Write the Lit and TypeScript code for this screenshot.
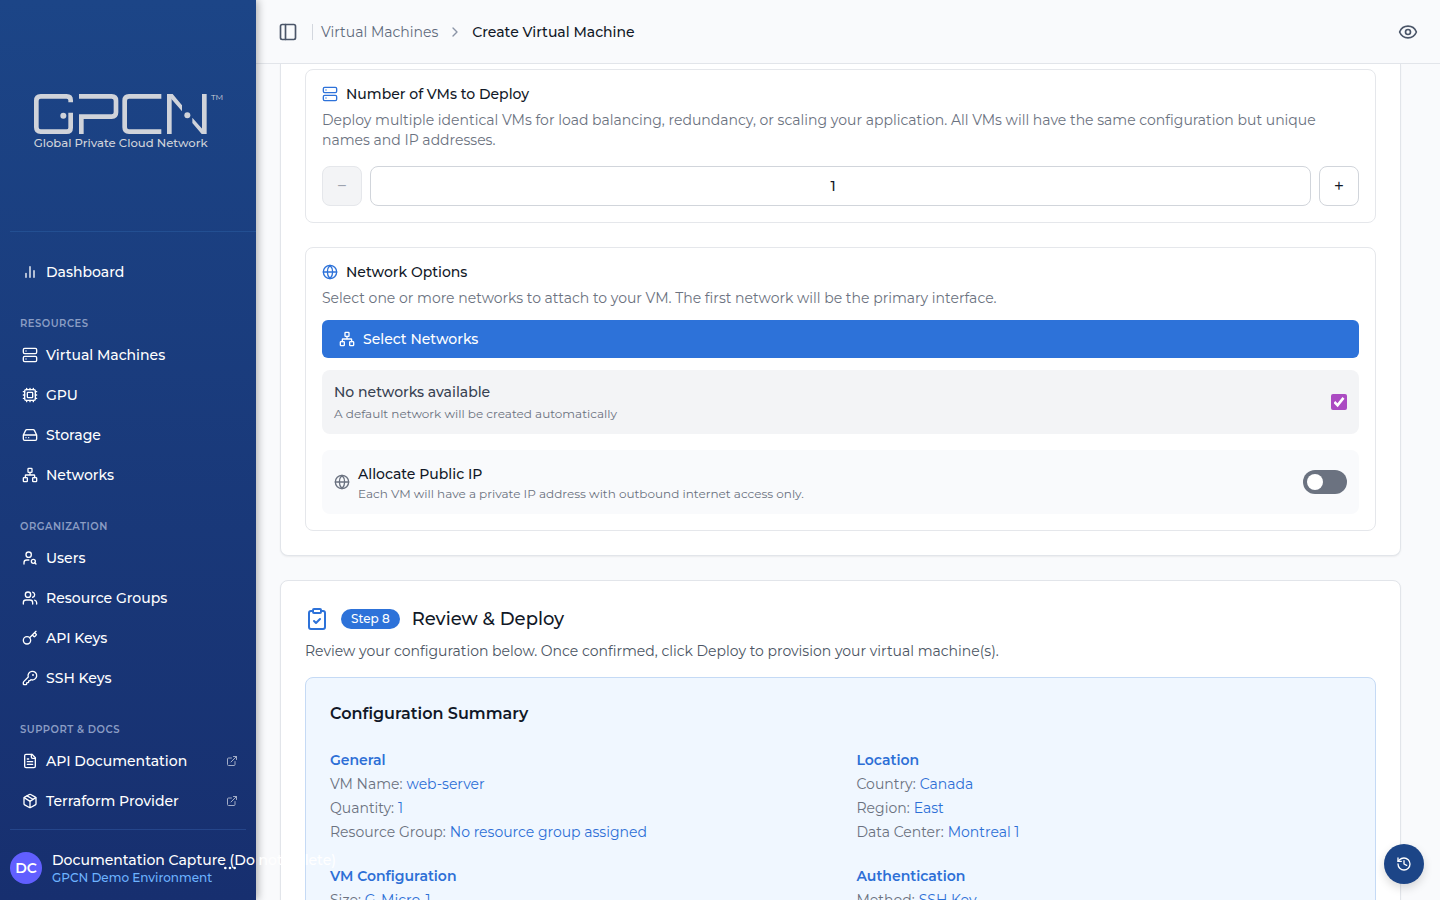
import { LitElement, html, css, svg, nothing } from "lit";
import type { TemplateResult } from "lit";
import { customElement, property, state } from "lit/decorators.js";

const icons: Record<string, TemplateResult> = {
  chart: svg`<path d="M18 20V10M12 20V4M6 20v-6"/>`,
  server: svg`<rect width="20" height="8" x="2" y="2" rx="2"/><rect width="20" height="8" x="2" y="14" rx="2"/><path d="M6 6h.01M6 18h.01"/>`,
  cpu: svg`<path d="M12 20v2M12 2v2M17 20v2M17 2v2M2 12h2M2 17h2M2 7h2M20 12h2M20 17h2M20 7h2M7 20v2M7 2v2"/><rect x="4" y="4" width="16" height="16" rx="2"/><rect x="8" y="8" width="8" height="8" rx="1"/>`,
  drive: svg`<path d="M22 12H2M5.45 5.11 2 12v6a2 2 0 0 0 2 2h16a2 2 0 0 0 2-2v-6l-3.45-6.89A2 2 0 0 0 16.76 4H7.24a2 2 0 0 0-1.79 1.11zM6 16h.01M10 16h.01"/>`,
  network: svg`<rect x="16" y="16" width="6" height="6" rx="1"/><rect x="2" y="16" width="6" height="6" rx="1"/><rect x="9" y="2" width="6" height="6" rx="1"/><path d="M5 16v-3a1 1 0 0 1 1-1h12a1 1 0 0 1 1 1v3M12 12V8"/>`,
  userSearch: svg`<circle cx="10" cy="7" r="4"/><path d="M10.3 15H7a4 4 0 0 0-4 4v2"/><circle cx="17" cy="17" r="3"/><path d="m21 21-1.9-1.9"/>`,
  users: svg`<path d="M16 21v-2a4 4 0 0 0-4-4H6a4 4 0 0 0-4 4v2"/><circle cx="9" cy="7" r="4"/><path d="M22 21v-2a4 4 0 0 0-3-3.87M16 3.13a4 4 0 0 1 0 7.75"/>`,
  key: svg`<path d="m15.5 7.5 2.3 2.3a1 1 0 0 0 1.4 0l2.1-2.1a1 1 0 0 0 0-1.4L19 4M21 2l-9.6 9.6"/><circle cx="7.5" cy="15.5" r="5.5"/>`,
  keyRound: svg`<path d="M2.586 17.414A2 2 0 0 0 2 18.828V21a1 1 0 0 0 1 1h3a1 1 0 0 0 1-1v-1a1 1 0 0 1 1-1h1a1 1 0 0 0 1-1v-1a1 1 0 0 1 1-1h.172a2 2 0 0 0 1.414-.586l.814-.814a6.5 6.5 0 1 0-4-4z"/><circle cx="16.5" cy="7.5" r=".5" fill="currentColor"/>`,
  file: svg`<path d="M15 2H6a2 2 0 0 0-2 2v16a2 2 0 0 0 2 2h12a2 2 0 0 0 2-2V7Z"/><path d="M14 2v4a2 2 0 0 0 2 2h4M10 9H8M16 13H8M16 17H8"/>`,
  box: svg`<path d="M11 21.73a2 2 0 0 0 2 0l7-4A2 2 0 0 0 21 16V8a2 2 0 0 0-1-1.73l-7-4a2 2 0 0 0-2 0l-7 4A2 2 0 0 0 3 8v8a2 2 0 0 0 1 1.73zM12 22V12"/><path d="m3.3 7 7.703 4.734a2 2 0 0 0 1.994 0L20.7 7M7.5 4.27l9 5.15"/>`,
  external: svg`<path d="M15 3h6v6M10 14 21 3M18 13v6a2 2 0 0 1-2 2H5a2 2 0 0 1-2-2V8a2 2 0 0 1 2-2h6"/>`,
  panel: svg`<rect width="18" height="18" x="3" y="3" rx="2"/><path d="M9 3v18"/>`,
  chevron: svg`<path d="m9 18 6-6-6-6"/>`,
  eye: svg`<path d="M2.062 12.348a1 1 0 0 1 0-.696 10.75 10.75 0 0 1 19.876 0 1 1 0 0 1 0 .696 10.75 10.75 0 0 1-19.876 0"/><circle cx="12" cy="12" r="3"/>`,
  globe: svg`<circle cx="12" cy="12" r="10"/><path d="M12 2a14.5 14.5 0 0 0 0 20 14.5 14.5 0 0 0 0-20M2 12h20"/>`,
  clipboard: svg`<rect width="8" height="4" x="8" y="2" rx="1"/><path d="M16 4h2a2 2 0 0 1 2 2v14a2 2 0 0 1-2 2H6a2 2 0 0 1-2-2V6a2 2 0 0 1 2-2h2M9 14l2 2 4-4"/>`,
  history: svg`<path d="M3 12a9 9 0 1 0 9-9 9.75 9.75 0 0 0-6.74 2.74L3 8"/><path d="M3 3v5h5M12 7v5l4 2"/>`,
  dots: svg`<circle cx="12" cy="12" r="1"/><circle cx="19" cy="12" r="1"/><circle cx="5" cy="12" r="1"/>`,
};

const icon = (name: string, size = 16) => html`<svg
  width=${size} height=${size} viewBox="0 0 24 24" fill="none" stroke="currentColor"
  stroke-width="2" stroke-linecap="round" stroke-linejoin="round" aria-hidden="true"
>${icons[name]}</svg>`;

const shared = css`
  *, *::before, *::after { box-sizing: border-box; }
  svg { display: block; flex: none; }
  a { color: inherit; text-decoration: none; }
  button, input { font: inherit; color: inherit; }
  button { cursor: pointer; }
  h1, h2, h3, h4, p, ul, dl, dd, dt { margin: 0; padding: 0; font-size: inherit; font-weight: inherit; }
  ul { list-style: none; }
`;

interface NavItem { label: string; icon: string; external?: boolean }
const groups: { title?: string; items: NavItem[] }[] = [
  { items: [{ label: "Dashboard", icon: "chart" }] },
  {
    title: "Resources",
    items: [
      { label: "Virtual Machines", icon: "server" },
      { label: "GPU", icon: "cpu" },
      { label: "Storage", icon: "drive" },
      { label: "Networks", icon: "network" },
    ],
  },
  {
    title: "Organization",
    items: [
      { label: "Users", icon: "userSearch" },
      { label: "Resource Groups", icon: "users" },
      { label: "API Keys", icon: "key" },
      { label: "SSH Keys", icon: "keyRound" },
    ],
  },
  {
    title: "Support & Docs",
    items: [
      { label: "API Documentation", icon: "file", external: true },
      { label: "Terraform Provider", icon: "box", external: true },
    ],
  },
];

@customElement("app-sidebar")
class AppSidebar extends LitElement {
  static styles = [shared, css`
    :host {
      display: flex; flex-direction: column; position: relative; z-index: 2;
      color: #fff; background: linear-gradient(#1c4587, #172f6f);
      box-shadow: 2px 0 8px rgba(0, 0, 0, 0.3);
    }
    .brand { margin-left: 10px; padding: 92px 32px 80px 23px; border-bottom: 1px solid #234f92; color: #d0d3da; }
    .mark { width: 190px; height: 59px; }
    .tm { font-size: 24px; }
    .tagline { font-size: 35px; font-weight: 500; }
    .nav { padding: 20px 10px 0; }
    .heading {
      padding: 24px 10px 4px; font-size: 10px; line-height: 15px; font-weight: 600;
      letter-spacing: 0.05em; text-transform: uppercase; color: #8b9dc4;
    }
    .link { display: flex; align-items: center; gap: 8px; height: 40px; padding: 0 8px 0 12px; font-weight: 500; }
    .link .grow { flex: 1; }
    .ext { opacity: 0.6; }
    .user {
      display: flex; align-items: center; gap: 10px; margin: auto 10px 0;
      padding: 19px 0 13px; border-top: 1px solid #25458a;
    }
    .avatar {
      display: grid; place-items: center; flex: none; width: 32px; height: 32px; border-radius: 50%;
      background: #615fff; font-weight: 600;
    }
    .who { flex: 1; min-width: 0; padding-top: 2px; white-space: nowrap; font-weight: 500; line-height: 18px; }
    .org { font-size: 12px; color: #6db3ff; }
    .more { display: block; padding: 0; border: 0; background: none; margin-right: 8px; }
  `];

  render() {
    return html`
      <div class="brand">
        <svg class="mark" viewBox="99 66 570 177" role="img" aria-label="GPCN Global Private Cloud Network"
          fill="none" stroke="currentColor" stroke-width="14">
          <path d="M212 97V91q0-12-12-12H122q-13 0-13 13v80q0 13 13 13h78q12 0 12-12V128"/>
          <path d="M237 79H335q13 0 13 13v35q0 13-13 13H244V192"/>
          <path d="M484 79H387q-13 0-13 13v80q0 13 13 13h97"/>
          <path d="M508 192V72M613 72V192"/>
          <path stroke="none" fill="currentColor" d="M501 72h17l28 34v18l-39-45zM577 143l36 41v8h-8l-28-33z"/>
          <g stroke="none" fill="currentColor">
            <circle cx="190" cy="137" r="9"/><circle cx="562" cy="136" r="9"/>
            <text class="tm" x="633" y="90">TM</text>
            <text class="tagline" x="101" y="231">Global Private Cloud Network</text>
          </g>
        </svg>
      </div>
      <nav class="nav" aria-label="Main">
        ${groups.map((g) => html`
          ${g.title ? html`<h2 class="heading">${g.title}</h2>` : nothing}
          <ul>
            ${g.items.map((i) => html`<li><a class="link" href="#">${icon(i.icon)}<span class="grow">${i.label}</span>
              ${i.external ? html`<span class="ext">${icon("external", 12)}</span>` : nothing}</a></li>`)}
          </ul>`)}
      </nav>
      <div class="user">
        <span class="avatar">DC</span>
        <div class="who"><p>Documentation Capture (Do not delete)</p><p class="org">GPCN Demo Environment</p></div>
        <button class="more" aria-label="Account menu">${icon("dots")}</button>
      </div>`;
  }
}

@customElement("app-topbar")
class AppTopbar extends LitElement {
  static styles = [shared, css`
    :host {
      display: flex; align-items: center; height: 64px; padding: 0 22px; flex: none;
      border-bottom: 1px solid #e2e5ea; background: #f9fafc;
    }
    .tool { display: block; padding: 0; border: 0; background: none; color: #4a5568; }
    .crumbs { display: flex; align-items: center; gap: 8px; flex: 1; margin-left: 14px; }
    .rule { width: 1px; height: 16px; background: #d3d7de; }
    .parent { color: #5f6b7c; }
    .sep { padding: 0 1px; color: #8a94a6; }
    .here { font-weight: 500; color: #111827; }
  `];
  render() {
    return html`
      <button class="tool" aria-label="Toggle sidebar">${icon("panel", 20)}</button>
      <nav class="crumbs" aria-label="Breadcrumb">
        <span class="rule"></span>
        <a class="parent" href="#">Virtual Machines</a>
        <span class="sep">${icon("chevron")}</span>
        <span class="here" aria-current="page">Create Virtual Machine</span>
      </nav>
      <button class="tool" aria-label="Display options">${icon("eye", 20)}</button>`;
  }
}

@customElement("vm-network-step")
class VmNetworkStep extends LitElement {
  @state() count = 1;

  static styles = [shared, css`
    :host {
      display: flex; flex-direction: column; gap: 24px; padding: 5px 24px 24px;
      border: 1px solid #e2e5ea; border-top: 0; border-radius: 0 0 8px 8px; background: #fff;
      box-shadow: 0 1px 2px rgba(0, 0, 0, 0.06);
    }
    .panel { padding: 16px; border: 1px solid #e5e7eb; border-radius: 8px; }
    .title { display: flex; align-items: center; gap: 8px; line-height: 16px; font-weight: 500; color: #111827; }
    .title svg { color: #2d72d9; }
    .desc { margin-top: 8px; color: #6b7280; }
    .stepper { display: flex; gap: 8px; margin-top: 16px; }
    .step, .count { height: 40px; padding: 0; border: 1px solid #d1d5db; border-radius: 8px; background: #fff; font-weight: 500; color: #111827; }
    .step { width: 40px; flex: none; font-size: 18px; font-weight: 400; }
    .step:disabled { background: #f3f4f6; border-color: #e5e7eb; color: #9ca3af; }
    .count { flex: 1; min-width: 0; text-align: center; }
    .select {
      display: flex; align-items: center; gap: 8px; width: 100%; height: 38px; margin-top: 12px; padding: 0 17px;
      border: 0; border-radius: 6px; background: #2d72d9; color: #fff; font-weight: 500;
    }
    .row { display: flex; align-items: center; gap: 8px; height: 64px; margin-top: 12px; padding: 0 12px; border-radius: 8px; background: #f3f4f6; }
    .row.ip { margin-top: 16px; background: #f9fafc; color: #6b7280; }
    .text { display: flex; flex-direction: column; flex: 1; gap: 2px; padding-top: 2px; }
    .ip .text { gap: 0; padding-top: 4px; }
    .name { font-weight: 500; color: #374151; }
    .ip .name { color: #111827; }
    .hint { font-size: 12px; color: #6b7280; }
    .box {
      appearance: none; display: grid; place-items: center; width: 16px; height: 16px; margin: 0;
      border-radius: 2px; background: #ab4bc2;
    }
    .box::before {
      content: ""; width: 11px; height: 11px; background: #fff;
      clip-path: polygon(0 58%, 16% 42%, 36% 62%, 82% 4%, 100% 20%, 38% 98%);
    }
    .switch { appearance: none; width: 44px; height: 24px; margin: 0; padding: 4px; border-radius: 12px; background: #6b7280; }
    .switch::before { content: ""; display: block; width: 16px; height: 16px; border-radius: 50%; background: #fff; }
    .switch:checked::before { margin-left: auto; }
  `];

  render() {
    return html`
      <section class="panel">
        <label class="title" for="count">${icon("server")}Number of VMs to Deploy</label>
        <p class="desc">Deploy multiple identical VMs for load balancing, redundancy, or scaling your application. All VMs will have the same configuration but unique names and IP addresses.</p>
        <div class="stepper">
          <button class="step" aria-label="Fewer" ?disabled=${this.count <= 1} @click=${() => this.count--}>−</button>
          <input class="count" id="count" type="number" min="1" .value=${String(this.count)} />
          <button class="step" aria-label="More" @click=${() => this.count++}>+</button>
        </div>
      </section>
      <section class="panel">
        <h3 class="title">${icon("globe")}Network Options</h3>
        <p class="desc">Select one or more networks to attach to your VM. The first network will be the primary interface.</p>
        <button class="select">${icon("network")}Select Networks</button>
        <div class="row none">
          <div class="text"><label class="name" for="auto">No networks available</label><p class="hint">A default network will be created automatically</p></div>
          <input class="box" id="auto" type="checkbox" checked />
        </div>
        <div class="row ip">
          ${icon("globe")}
          <div class="text"><label class="name" for="ip">Allocate Public IP</label><p class="hint">Each VM will have a private IP address with outbound internet access only.</p></div>
          <input class="switch" id="ip" type="checkbox" role="switch" />
        </div>
      </section>`;
  }
}

interface Group { title: string; rows: [string, string][] }

@customElement("vm-review-step")
class VmReviewStep extends LitElement {
  @property({ attribute: false }) summary: Group[] = [
    { title: "General", rows: [["VM Name", "web-server"], ["Quantity", "1"], ["Resource Group", "No resource group assigned"]] },
    { title: "Location", rows: [["Country", "Canada"], ["Region", "East"], ["Data Center", "Montreal 1"]] },
    { title: "VM Configuration", rows: [["Size", "G-Micro-1"]] },
    { title: "Authentication", rows: [["Method", "SSH Key"]] },
  ];

  static styles = [shared, css`
    :host {
      display: block; padding: 24px; border: 1px solid #e2e5ea; border-radius: 8px; background: #fff;
      box-shadow: 0 1px 2px rgba(0, 0, 0, 0.06);
    }
    .head { display: flex; align-items: center; gap: 12px; height: 28px; color: #111827; }
    .head svg { color: #2d72d9; }
    .badge { padding: 0 10px; border-radius: 10px; background: #2d72d9; color: #fff; font-size: 12px; line-height: 20px; font-weight: 500; }
    .title { font-size: 18px; font-weight: 500; }
    .desc { margin-top: 8px; color: #4b5563; }
    .summary { margin-top: 16px; padding: 24px; border: 1px solid #c5daf5; border-radius: 8px; background: #f0f7ff; }
    .caption { font-size: 16px; line-height: 24px; font-weight: 600; color: #111827; }
    .grid { display: grid; grid-template-columns: 1fr 1fr; gap: 24px 32px; margin-top: 24px; }
    .group { display: flex; flex-direction: column; gap: 4px; }
    .group h4 { font-weight: 600; color: #2d6fd6; }
    .pair { display: flex; gap: 4px; color: #6b7280; }
    .pair dd { color: #2d6fd6; }
    dl { display: contents; }
  `];

  render() {
    return html`
      <header class="head">${icon("clipboard", 24)}<span class="badge">Step 8</span><h2 class="title">Review &amp; Deploy</h2></header>
      <p class="desc">Review your configuration below. Once confirmed, click Deploy to provision your virtual machine(s).</p>
      <div class="summary">
        <h3 class="caption">Configuration Summary</h3>
        <div class="grid">
          ${this.summary.map((g) => html`<section class="group"><h4>${g.title}</h4>
            <dl>${g.rows.map(([k, v]) => html`<div class="pair"><dt>${k}:</dt><dd>${v}</dd></div>`)}</dl></section>`)}
        </div>
      </div>`;
  }
}

@customElement("app-root")
class AppRoot extends LitElement {
  static styles = [shared, css`
    :host {
      display: grid; grid-template-columns: 256px minmax(0, 1fr); height: 100vh; overflow: hidden;
      font: 400 14px/20px Montserrat, Inter, sans-serif; color: #111827; background: #f9fafc;
    }
    .main { display: flex; flex-direction: column; min-height: 0; }
    .content { display: flex; flex-direction: column; gap: 24px; flex: 1; min-height: 0; overflow: auto; scrollbar-width: none; padding: 0 39px 24px 24px; }
    .content > * { flex: none; }
    .fab {
      position: fixed; right: 16px; bottom: 16px; z-index: 3; display: grid; place-items: center;
      width: 40px; height: 40px; padding: 0; border: 0; border-radius: 50%; background: #1c4587; color: #fff;
      box-shadow: 0 4px 10px rgba(0, 0, 0, 0.15);
    }
  `];
  render() {
    return html`
      <app-sidebar></app-sidebar>
      <main class="main">
        <app-topbar></app-topbar>
        <div class="content">
          <vm-network-step></vm-network-step>
          <vm-review-step></vm-review-step>
        </div>
      </main>
      <button class="fab" aria-label="Activity history">${icon("history")}</button>`;
  }
}
